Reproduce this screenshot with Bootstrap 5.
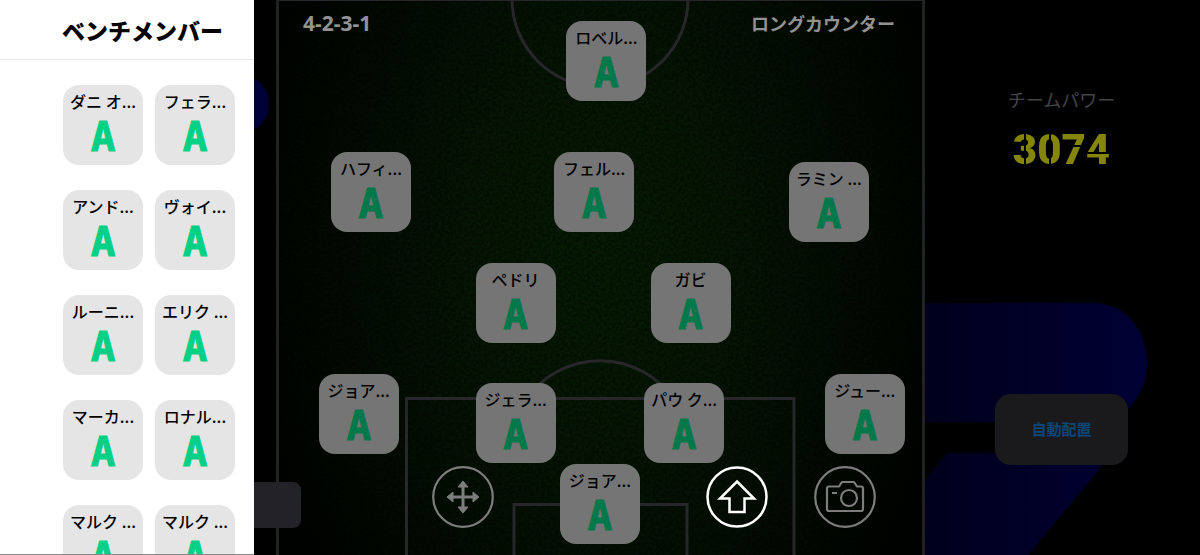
<!DOCTYPE html>
<html lang="ja">
<head>
<meta charset="utf-8">
<meta name="viewport" content="width=device-width, initial-scale=1">
<title>ベンチメンバー</title>
<link href="https://cdn.jsdelivr.net/npm/bootstrap@5.3.0/dist/css/bootstrap.min.css" rel="stylesheet">
<style>
  body { background: #000; color: #000; font-family: "Noto Sans CJK JP", sans-serif; }
  .squad { height: 100vh; }
  .bench { width: 254px; background: #fff; border-bottom: 1px solid #888; z-index: 3; }
  .bench-head { height: 60px; padding-left: 62px; border-bottom: 1px solid #e9e9ea; }
  .bench-title { font-size: 23px; line-height: 32px; font-weight: 900; }
  .bench-grid { display: grid; grid-template-columns: 80px 80px; gap: 25px 12px; padding: 25px 0 0 63px; }
  .player { display: flex; flex-direction: column; align-items: center; justify-content: flex-start; width: 80px; height: 80px; border: 0; border-radius: 16px; padding: 5px 0 0; background: #e5e5e5; color: #000; white-space: nowrap; }
  .player-name { font-size: 16px; line-height: 22px; font-weight: 500; }
  .player-rank { font-family: "DejaVu Sans Mono", monospace; font-size: 41px; line-height: 50px; font-weight: 700; color: #06d085; -webkit-text-stroke: 1px #06d085; }
  .gutter { width: 22px; }
  .gutter-blob { left: -40px; top: 75px; width: 55px; height: 58px; border-radius: 50%; background: #000038; }
  .gutter-tab { left: -20px; top: 482px; width: 67px; height: 46px; border-radius: 8px; background: #232227; z-index: 2; }
  .pitch { border: solid #222225; border-width: 0 3px; background: radial-gradient(ellipse 55% 95% at 50% 45%, #071c04 0%, #051403 45%, #000300 100%); }
  .pitch-lines { fill: none; stroke: #27272b; stroke-width: 3; }
  .pitch-head { padding: 7px 27px 0 24px; color: #929292; font-size: 18px; line-height: 32px; font-weight: 700; }
  .formation { font-family: "Noto Sans", sans-serif; font-size: 21px; }
  .spot { position: absolute; left: calc(var(--x) * 0.1%); top: calc(var(--y) * 0.1%); transform: translate(-50%, -50%); }
  .pitch .player { background: #757575; }
  .pitch .player-rank { color: #02784b; -webkit-text-stroke-color: #02784b; }
  .tool { width: 62px; height: 62px; padding: 0; border: 0; background: none; color: #7d7d7d; }
  .tool.lit { color: #fff; }
  .power { width: 275px; padding: 84px 2px 0 0; }
  .power-label { font-size: 18px; line-height: 30px; color: #444446; }
  .power-value { font-family: Roboto, sans-serif; font-weight: 900; font-size: 42px; line-height: 48px; margin: 12px 0 220px; }
  .power-value span { color: transparent; -webkit-background-clip: text; background-clip: text; background-image: linear-gradient(var(--cut), #85850a 0 var(--a), transparent var(--a) var(--b), #85850a var(--b)); }
  .cut-v { --cut: 90deg; --a: 47%; --b: 54%; }
  .cut-7 { --cut: 180deg; --a: 41%; --b: 44%; }
  .cut-4 { --cut: 180deg; --a: 55%; --b: 59%; }
  .auto-btn { width: 133px; height: 71px; border: 0; border-radius: 16px; background: #1a1a1d; color: #0b4678; font-size: 15px; font-weight: 700; }
</style>
</head>
<body>
<div class="squad d-flex overflow-hidden">
  <aside class="bench position-relative flex-shrink-0 overflow-hidden">
    <header class="bench-head d-flex align-items-center"><h1 class="bench-title m-0">ベンチメンバー</h1></header>
    <div class="bench-grid">
      <button class="player"><span class="player-name">ダニ オ...</span><span class="player-rank">A</span></button>
      <button class="player"><span class="player-name">フェラ...</span><span class="player-rank">A</span></button>
      <button class="player"><span class="player-name">アンド...</span><span class="player-rank">A</span></button>
      <button class="player"><span class="player-name">ヴォイ...</span><span class="player-rank">A</span></button>
      <button class="player"><span class="player-name">ルーニ...</span><span class="player-rank">A</span></button>
      <button class="player"><span class="player-name">エリク ...</span><span class="player-rank">A</span></button>
      <button class="player"><span class="player-name">マーカ...</span><span class="player-rank">A</span></button>
      <button class="player"><span class="player-name">ロナル...</span><span class="player-rank">A</span></button>
      <button class="player"><span class="player-name">マルク ...</span><span class="player-rank">A</span></button>
      <button class="player"><span class="player-name">マルク ...</span><span class="player-rank">A</span></button>
    </div>
  </aside>

  <div class="gutter position-relative flex-shrink-0 z-2">
    <div class="gutter-blob position-absolute"></div>
    <div class="gutter-tab position-absolute"></div>
  </div>

  <main class="pitch position-relative flex-grow-1">
    <svg class="pitch-lines position-absolute top-0 start-0 w-100 h-100" viewBox="0 0 643 555" preserveAspectRatio="none" aria-hidden="true">
      <filter id="grass" x="0" y="0" width="100%" height="100%"><feTurbulence type="fractalNoise" baseFrequency=".35" numOctaves="2"/><feColorMatrix values="0 0 0 0 0  0 0 0 0 0  0 0 0 0 0  0 2 0 0 -.7"/></filter>
      <rect width="643" height="555" stroke="none" filter="url(#grass)" opacity=".5"/>
      <path d="M0 0H643" stroke-width="2"/>
      <circle cx="321" cy="-1" r="88"/>
      <path d="M127.500 555V398.500H515V555M235 555V504.500H408V555M248 398A90 90 0 0 1 394 398"/>
    </svg>
    <div class="pitch-head position-relative d-flex justify-content-between">
      <span class="formation">4-2-3-1</span><span>ロングカウンター</span>
    </div>
    <button class="player spot" style="--x:509;--y:110"><span class="player-name">ロベル...</span><span class="player-rank">A</span></button>
    <button class="player spot" style="--x:143;--y:346"><span class="player-name">ハフィ...</span><span class="player-rank">A</span></button>
    <button class="player spot" style="--x:490;--y:346"><span class="player-name">フェル...</span><span class="player-rank">A</span></button>
    <button class="player spot" style="--x:855;--y:364"><span class="player-name">ラミン ...</span><span class="player-rank">A</span></button>
    <button class="player spot" style="--x:368;--y:546"><span class="player-name">ペドリ</span><span class="player-rank">A</span></button>
    <button class="player spot" style="--x:640;--y:546"><span class="player-name">ガビ</span><span class="player-rank">A</span></button>
    <button class="player spot" style="--x:124;--y:746"><span class="player-name">ジョア...</span><span class="player-rank">A</span></button>
    <button class="player spot" style="--x:368;--y:763"><span class="player-name">ジェラ...</span><span class="player-rank">A</span></button>
    <button class="player spot" style="--x:630;--y:763"><span class="player-name">パウ ク...</span><span class="player-rank">A</span></button>
    <button class="player spot" style="--x:911;--y:746"><span class="player-name">ジュー...</span><span class="player-rank">A</span></button>
    <button class="player spot" style="--x:499;--y:908"><span class="player-name">ジョア...</span><span class="player-rank">A</span></button>

    <button class="tool spot" style="--x:286;--y:896" aria-label="移動">
      <svg class="d-block" width="62" height="62" viewBox="0 0 62 62" fill="none" stroke="currentColor" stroke-width="2.200"><circle cx="31" cy="31" r="29.800"/><path d="M31 17V45M17 31H45" stroke-width="3"/><path fill="currentColor" stroke-width="1" d="M31 15l5 6H26zM31 47l5-6H26zM15 31l6-5v10zM47 31l-6-5v10z"/></svg>
    </button>
    <button class="tool lit spot" style="--x:712;--y:896" aria-label="上へ">
      <svg class="d-block" width="62" height="62" viewBox="0 0 62 62" fill="none" stroke="currentColor" stroke-width="2.500"><circle cx="31" cy="31" r="29.500"/><path d="M31 15.500L48 32.500H38.500V46H23.500V32.500H14z"/></svg>
    </button>
    <button class="tool spot" style="--x:880;--y:896" aria-label="カメラ">
      <svg class="d-block" width="62" height="62" viewBox="0 0 62 62" fill="none" stroke="currentColor" stroke-width="2.200" stroke-linejoin="round"><circle cx="31" cy="31" r="29.800"/><path d="M15 20.500H25L28 16H40L43 20.500H47Q49 20.500 49 22.500V43Q49 45 47 45H15Q13 45 13 43V22.500Q13 20.500 15 20.500zM18 27H23"/><circle cx="35" cy="32" r="8"/></svg>
    </button>
  </main>

  <section class="power position-relative flex-shrink-0 d-flex flex-column align-items-center">
    <svg class="position-absolute top-0 start-0 w-100 h-100" viewBox="0 0 275 555" preserveAspectRatio="xMinYMin slice" aria-hidden="true">
      <defs><linearGradient id="navy" gradientUnits="userSpaceOnUse" x1="0" y1="0" x2="222" y2="0"><stop stop-color="#00001c"/><stop offset=".6" stop-color="#00002b"/><stop offset="1" stop-color="#000034"/></linearGradient></defs>
      <path fill="url(#navy)" d="M0 303H168C201 303 222 330 222 363C222 383 215 396 203 409L174 470L103 555H0V480L22 453H90V422H0z"/>
    </svg>
    <div class="power-label position-relative">チームパワー</div>
    <div class="power-value position-relative"><span class="cut-v">3</span><span class="cut-v">0</span><span class="cut-7">7</span><span class="cut-4">4</span></div>
    <button class="auto-btn position-relative">自動配置</button>
  </section>
</div>
<script src="https://cdn.jsdelivr.net/npm/bootstrap@5.3.0/dist/js/bootstrap.bundle.min.js"></script>
</body>
</html>
